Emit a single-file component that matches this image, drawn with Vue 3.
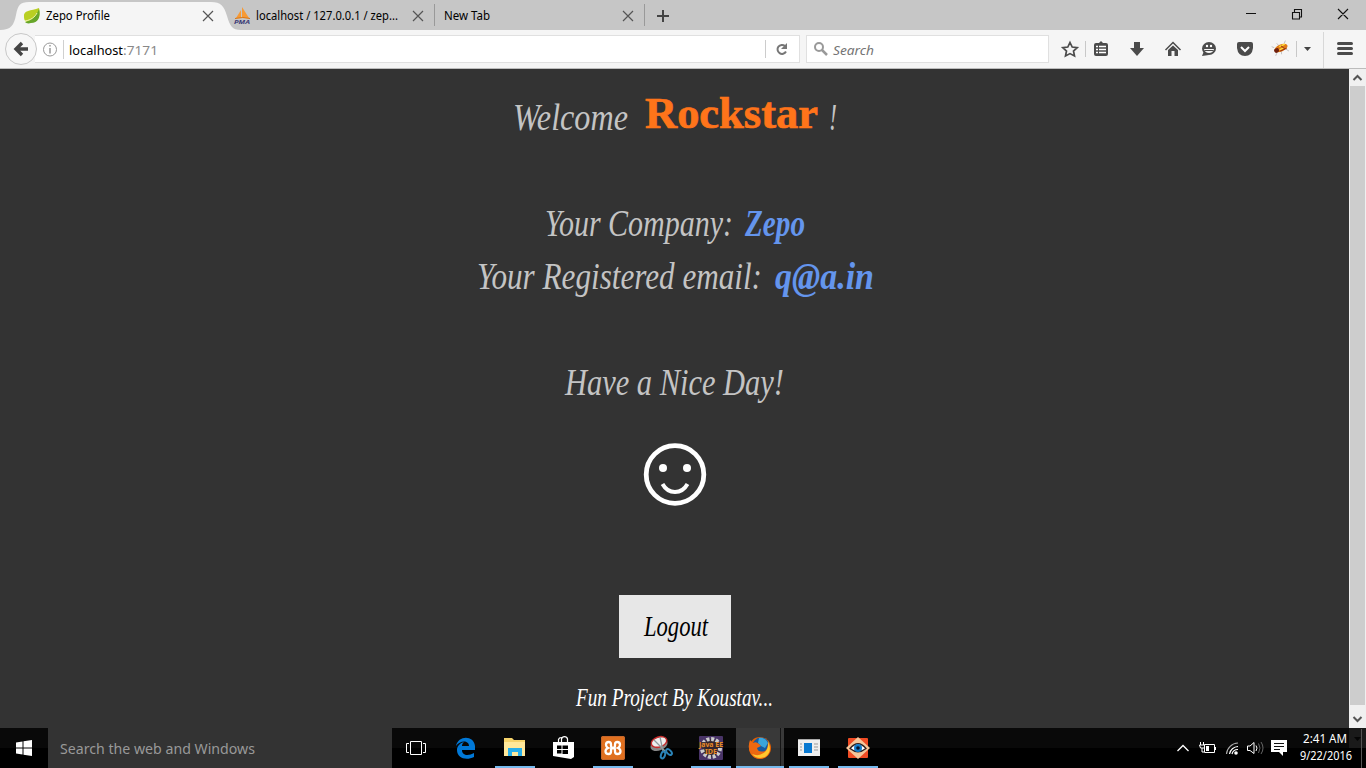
<script setup>
const lines = [
  { id: 'welcome', h: 107, base: 61, words: [
    { t: 'Welcome', x: 513, w: 115 },
    { t: 'Rockstar', x: 645, w: 173, c: 'rock', y: 59 },
    { t: '!', x: 829, w: 8 } ] },
  { id: 'company', h: 53, base: 60, words: [
    { t: 'Your Company:', x: 545, w: 188 },
    { t: 'Zepo', x: 745, w: 60, c: 'blue' } ] },
  { id: 'email', h: 106, base: 60, words: [
    { t: 'Your Registered email:', x: 477, w: 285 },
    { t: 'q@a.in', x: 775, w: 99, c: 'blue' } ] },
  { id: 'day', h: 96, base: 60, words: [
    { t: 'Have a Nice Day!', x: 565, w: 219 } ] }
]
</script>

<template>
  <div class="screen">
    <header class="tabs">
      <svg class="tabshape" width="250" height="30"><path d="M0 30C11 30 14 25 16 15C18 5 20 2 29 2H211C221 2 224 6 227 16C230 26 232 30 241 30Z" fill="#f5f5f5"/></svg>
      <div class="tab first">
        <svg width="18" height="18" viewBox="0 0 18 18"><path d="M1 10C0 3 8 4 16 1C18 9 15 15 9 15C5 16 1 15 1 10Z" fill="#b9cf23"/><path d="M2 15C8 14 13 10 16 2C18 10 15 16 8 16C5 17 3 16 2 15Z" fill="#67a62a"/><path d="M2 14C8 13 12 10 14 6" stroke="#eef4b0" fill="none"/></svg>
        <svg class="label" width="150" height="22"><text x="0" y="15" textLength="64" lengthAdjust="spacingAndGlyphs">Zepo Profile</text></svg>
        <svg class="close" width="12" height="12"><path d="M1 1L11 11M11 1L1 11"/></svg>
      </div>
      <div class="tab second">
        <svg width="18" height="18" viewBox="0 0 18 18"><path d="M2 11L7 3V11ZM8 11V0L15 11Z" fill="#f79a35"/><path d="M1 11.500Q9 9.500 16 11.500" stroke="#d97513" fill="none"/><text x="0" y="17" font-size="6" font-weight="bold" font-style="italic" textLength="16" lengthAdjust="spacingAndGlyphs" fill="#3b3b76">PMA</text></svg>
        <svg class="label" width="148" height="22"><text x="0" y="15" textLength="142" lengthAdjust="spacingAndGlyphs">localhost / 127.0.0.1 / zep...</text></svg>
        <svg class="close" width="12" height="12"><path d="M1 1L11 11M11 1L1 11"/></svg>
      </div>
      <div class="tab third">
        <svg class="label" width="100" height="22"><text x="0" y="15" textLength="46" lengthAdjust="spacingAndGlyphs">New Tab</text></svg>
        <svg class="close" width="12" height="12"><path d="M1 1L11 11M11 1L1 11"/></svg>
      </div>
      <svg class="plus" width="14" height="14"><path d="M7 1V13M1 7H13" stroke="#444" stroke-width="2"/></svg>
      <svg class="winctl" width="120" height="30"><path d="M10 13.500H20M56.500 12.500H63.500V19H56.500ZM58.500 12V9.500H65.500V17H64M102 9L112 19M112 9L102 19" fill="none" stroke="#111" stroke-width="1.1"/></svg>
    </header>

    <nav class="nav">
      <div class="url">
        <svg width="58" height="27"><circle cx="15" cy="13.500" r="6.500" fill="none" stroke="#999"/><path d="M15 12V17.500M15 9V10.500" stroke="#999" stroke-width="1.500"/><path d="M28.500 4V23" stroke="#d0d0d0"/></svg>
        <svg class="address" width="120" height="27"><text x="0" y="19" textLength="54" lengthAdjust="spacingAndGlyphs">localhost</text><text class="port" x="54" y="19" textLength="35" lengthAdjust="spacingAndGlyphs">:7171</text></svg>
        <svg class="reload" width="34" height="27"><path d="M.5 4V22" stroke="#ccc"/><path d="M20 10A4.500 4.500 0 1 0 21 15.500" fill="none" stroke="#777" stroke-width="2"/><path d="M22 7V13H16Z" fill="#777"/></svg>
      </div>
      <div class="search">
        <svg width="22" height="26"><circle cx="12" cy="11" r="4" fill="none" stroke="#999" stroke-width="2"/><path d="M15 14L20 19" stroke="#999" stroke-width="2.500"/></svg>
        <svg width="100" height="26"><text class="hint" x="4" y="19" textLength="41" lengthAdjust="spacingAndGlyphs">Search</text></svg>
      </div>
      <svg class="tools" width="312" height="38" viewBox="1054 30 312 38">
        <path d="M1070 42.500L1072.200 47L1077.200 47.600L1073.500 51L1074.500 56L1070 53.600L1065.500 56L1066.500 51L1062.800 47.600L1067.800 47Z" fill="none" stroke="#4b4b4b" stroke-width="1.700"/>
        <path d="M1085.500 41V57M1296.500 41V57" stroke="#c8c8c8"/>
        <path d="M1096 43H1099L1101 41L1103 43H1106Q1108 43 1108 45V54Q1108 56 1106 56H1096Q1094 56 1094 54V45Q1094 43 1096 43Z" fill="#4b4b4b"/><path d="M1096 46.500H1098M1099 46.500H1106M1096 49.500H1098M1099 49.500H1106M1096 52.500H1098M1099 52.500H1106" stroke="#fff" stroke-width="1.500"/>
        <path d="M1134 42H1140V48H1144L1137 56L1130 48H1134Z" fill="#4b4b4b"/>
        <path d="M1165.500 50L1173 42.500L1180.500 50" fill="none" stroke="#4b4b4b" stroke-width="1.500"/><path d="M1168 50L1173 45.500L1178 50V56H1174.500V51H1171.500V56H1168Z" fill="#4b4b4b"/>
        <ellipse cx="1209" cy="48.500" rx="7" ry="6.500" fill="#4b4b4b"/><path d="M1202 56L1204 51L1209 55Z" fill="#4b4b4b"/><path d="M1204 49H1214Q1213 53 1209 53Q1205 53 1204 49" fill="#f5f5f5"/><path d="M1204.500 50.500H1213.500" stroke="#4b4b4b"/><circle cx="1207" cy="46" r="1.200" fill="#fff"/><circle cx="1211" cy="46" r="1.200" fill="#fff"/>
        <path d="M1239 42H1251Q1253 42 1253 44V48Q1252 56 1245 56Q1238 56 1237 48V44Q1237 42 1239 42Z" fill="#4b4b4b"/><path d="M1241 47L1245 51L1249 47" stroke="#fff" stroke-width="2" fill="none"/>
        <g transform="rotate(-24 1281 48)"><path d="M1275 45L1273 43M1280 45L1279 42M1286 45L1288 43M1275 51L1273 53M1280 51L1279 54M1285 51L1287 54" stroke="#bbb" stroke-width=".8"/><ellipse cx="1281" cy="48" rx="7" ry="3.500" fill="#e07b18"/><path d="M1280 46H1286M1279 49H1284" stroke="#ffe43d" stroke-width="1.300"/><ellipse cx="1276" cy="48.500" rx="2.500" ry="2.300" fill="#70200d"/><path d="M1279 50.500H1286M1282 46L1284 50" stroke="#9c3411"/></g>
        <path d="M1304 47H1311L1307.500 51Z" fill="#444"/><path d="M1323.500 32V68" stroke="#d8d8d8"/>
        <path d="M1338.500 43.500H1351.500M1338.500 48.500H1351.500M1338.500 53.500H1351.500" stroke="#4b4b4b" stroke-width="3" stroke-linecap="round"/>
      </svg>
      <svg class="back" width="34" height="34"><circle cx="17" cy="17" r="15.500" fill="#f7f7f7" stroke="#c8c8c8"/><path d="M24 17H12M18 11L12 17L18 23" fill="none" stroke="#444" stroke-width="3.400"/></svg>
    </nav>

    <div class="body">
      <main class="page">
        <svg v-for="l in lines" :key="l.id" class="line" width="1349" :height="l.h">
          <text v-for="w in l.words" :key="w.t" :class="w.c" :x="w.x" :y="w.y || l.base" :textLength="w.w" lengthAdjust="spacingAndGlyphs">{{ w.t }}</text>
        </svg>
        <svg class="smile" width="64" height="64"><g fill="none" stroke="#fff"><circle cx="32" cy="31.500" r="28.800" stroke-width="4.800"/><path d="M19.500 41Q24 49 32 49Q40 49 44.500 41" stroke-width="4"/></g><circle cx="20" cy="25" r="4" fill="#fff"/><circle cx="44" cy="25" r="4" fill="#fff"/></svg>
        <button class="logout"><svg width="112" height="63"><text x="25" y="41" textLength="64" lengthAdjust="spacingAndGlyphs">Logout</text></svg></button>
        <svg class="credit" width="200" height="36"><text x="1" y="25" textLength="197" lengthAdjust="spacingAndGlyphs">Fun Project By Koustav...</text></svg>
      </main>
      <aside class="scroll">
        <svg width="17" height="17"><path d="M4.500 11L8.500 7L12.500 11" fill="none" stroke="#555" stroke-width="2"/></svg>
        <div class="thumb"></div>
        <svg width="17" height="17"><path d="M4.500 6L8.500 10L12.500 6" fill="none" stroke="#555" stroke-width="2"/></svg>
      </aside>
    </div>

    <footer class="taskbar">
      <div class="start"><svg width="16" height="16"><path d="M0 2.500L6.500 1.500V7.500H0ZM7.500 1.300L16 0V7.500H7.500ZM0 8.500H6.500V14.500L0 13.500ZM7.500 8.500H16V16L7.500 14.700Z" fill="#fff"/></svg></div>
      <div class="cortana"><svg width="220" height="40"><text x="0" y="26" textLength="195" lengthAdjust="spacingAndGlyphs">Search the web and Windows</text></svg></div>
      <div class="apps">
        <div class="app view"><svg width="24" height="24"><path d="M6.500 5.500H17.500V18.500H6.500ZM5 7.500H2.500V16.500H5M19 7.500H21.500V16.500H19" fill="none" stroke="#fff"/></svg></div>
        <div class="app"><svg width="24" height="24"><path d="M2 10C4-1 20-1 21 10V14H8C8 20 15 20 20 17V21C12 25 3 22 3 14C3 10 6 7 10 6C8 8 8 9 8 10H15C15 4 6 4 2 10Z" fill="#0078d7"/></svg></div>
        <div class="app run"><svg width="24" height="24"><path d="M1 2H9L11 4H22V20H1Z" fill="#f6d36b"/><path d="M1 6H22V20H1Z" fill="#ffe89a"/><path d="M5 20V12H19V20H15V16H9V20Z" fill="#28afea"/></svg></div>
        <div class="app"><svg width="24" height="24"><path d="M1 6H22V21L19 23L1 20Z" fill="#fff"/><path d="M6.500 6V3.500Q7 1.500 9.500 1.500M9.500 6V3Q10 .7 12.500 .7Q15 .7 15.500 3V6" stroke="#fff" stroke-width="1.200" fill="none"/><path d="M5 9.500H9.500V13H5ZM10.500 9.500H16V13H10.500ZM5 14H9.500V17.500H5ZM10.500 14H16V18H10.500Z" fill="#000"/></svg></div>
        <div class="app run"><svg width="24" height="24"><rect width="24" height="24" rx="2" fill="#e0701f"/><rect x=".5" y=".5" width="23" height="23" rx="2" fill="none" stroke="#c4662c"/><path d="M10 8.500Q10 6 7.700 6Q5 6 5 8.800Q5 11 7 12Q4.500 13 4.500 15.200Q4.500 18 7.700 18Q10 18 10 15.500V14.500Q10 12 12 12Q14 12 14 14.500V15.500Q14 18 16.300 18Q19.500 18 19.500 15.200Q19.500 13 17 12Q19 11 19 8.800Q19 6 16.300 6Q14 6 14 8.500V9.500Q14 12 12 12Q10 12 10 9.500Z" fill="none" stroke="#fff" stroke-width="2.300"/></svg></div>
        <div class="app"><svg width="24" height="24"><ellipse cx="9" cy="9" rx="9" ry="5.500" transform="rotate(-22 9 9)" fill="#888"/><ellipse cx="9" cy="6" rx="8" ry="5" transform="rotate(-18 9 6)" fill="#eee" stroke="#c52c2c" stroke-width="1.500"/><path d="M4 4L15 15M10 1L13 15" stroke="#8d9a9e" stroke-width="1.300"/><g fill="none" stroke="#2a83b7" stroke-width="2"><ellipse cx="13" cy="19" rx="2" ry="3.500" transform="rotate(20 13 19)"/><ellipse cx="19" cy="16" rx="2" ry="3.500" transform="rotate(-45 19 16)"/></g></svg></div>
        <div class="app run"><svg width="24" height="24"><rect width="24" height="24" rx="1" fill="#493467"/><circle cx="12" cy="12" r="9" fill="#382d38" stroke="#ccc" stroke-width="4" stroke-dasharray="3 1.700"/><path d="M0 6H24V12H18V18H6V12H0Z" fill="#33252c" opacity=".9"/><text class="ide" x="0" y="11" textLength="24" lengthAdjust="spacingAndGlyphs">Java EE</text><text class="ide" x="6" y="18" textLength="12" lengthAdjust="spacingAndGlyphs">IDE</text></svg></div>
        <div class="app active"><svg width="24" height="24"><circle cx="12" cy="12" r="11" fill="#e66000"/><circle cx="13" cy="10" r="8.500" fill="#175a9f"/><path d="M11 2Q17 1 20 7L17 12L13 10L10 7Z" fill="#3aa5db"/><path d="M2 4L5 7Q8 5 11 8L13 10L9 12Q10 17 17 15Q20 13 20 6Q25 15 18 21Q9 26 3 18Q-1 12 2 4Z" fill="#ed6811"/><path d="M20 5Q25 16 17 21Q9 24 4 18Q11 21 17 16Q21 12 20 5Z" fill="#ffc72e"/></svg></div>
        <div class="app run"><svg width="24" height="24"><rect x="1" y="3" width="22" height="17" fill="#eee"/><path d="M1 3.500H23" stroke="#aaa"/><rect x="7" y="7" width="8" height="10" fill="#0878d0"/><path d="M3 8H5M3 11H5M3 14H5M17 8H21M17 11H21M17 14H21" stroke="#999"/></svg></div>
        <div class="app run"><svg width="24" height="24"><rect x="2" y="2" width="20" height="20" rx="1" fill="#f04c24"/><path d="M0 12L12 1L24 12L12 23Z" fill="#f4c69b"/><path d="M4 12.500Q12 3 20 12.500Q12 19 4 12.500Z" fill="#fff" stroke="#2c2020" stroke-width="1.300"/><circle cx="12" cy="12" r="4" fill="#137cca"/><circle cx="12" cy="12" r="1.800" fill="#00142e"/></svg></div>
      </div>
      <svg class="tray" width="206" height="40" viewBox="1160 728 206 40">
        <path d="M1349 728H1366V748H1349Z" fill="#1a1a1a"/><path d="M1354 737H1361L1357.500 741Z" fill="#050505"/>
        <path d="M1177.500 751L1183 745.500L1188.500 751" fill="none" stroke="#fff" stroke-width="1.300"/>
        <path d="M1204.500 744.500H1214.500V752.500H1204.500ZM1215.500 747V750M1200.500 742V745M1203.500 742V745M1199.500 745H1204.500V748H1200.500ZM1202 748V752H1204" fill="none" stroke="#fff"/><path d="M1206 746H1209V751H1206Z" fill="#fff"/>
        <g fill="none" stroke="#aaa" stroke-width="1.200"><path d="M1226.500 754A12 12 0 0 1 1238 743"/><path d="M1229.500 754A9 9 0 0 1 1238 746.500" stroke="#fff"/><path d="M1232 754A6 6 0 0 1 1238 749.500" stroke="#fff"/></g><circle cx="1236" cy="753" r="1.800" fill="#fff"/>
        <path d="M1247.500 746H1250L1254 742.500V753.500L1250 750.500H1247.500Z" fill="none" stroke="#fff"/><path d="M1256 745.500Q1258 748 1256 751" fill="none" stroke="#fff"/><path d="M1258.500 743.500Q1261.500 748 1258.500 753M1261 742Q1265 748 1261 754" fill="none" stroke="#666"/>
        <path d="M1271 740H1287V752H1283V756L1279 752H1271Z" fill="#fff"/><path d="M1274 743.500H1284M1274 746.500H1284M1274 749.500H1280" stroke="#111"/>
        <text x="1303" y="743" textLength="44" lengthAdjust="spacingAndGlyphs">2:41 AM</text>
        <text x="1300" y="760" textLength="52" lengthAdjust="spacingAndGlyphs">9/22/2016</text>
        <path d="M1361.500 729V768" stroke="#555"/>
      </svg>
    </footer>
  </div>
</template>

<style scoped>
.screen { width: 1366px; height: 768px; display: flex; flex-direction: column; overflow: hidden; background: #333; font-family: "Noto Sans", "Open Sans", sans-serif; }
svg { display: block; flex: none; overflow: visible; }
.tabs { height: 30px; flex: none; display: flex; align-items: center; background: #c6c6c6; position: relative; }
.tabshape { position: absolute; left: 0; top: 0; }
.tab { display: flex; align-items: center; height: 22px; position: relative; font-size: 12px; box-sizing: border-box; padding-top: 1px; }
.first { width: 214px; margin-left: 23px; gap: 5px; }
.second { width: 198px; gap: 4px; border-right: 1px solid #999; }
.second > svg:first-child { margin-left: -3px; }
.third { width: 210px; padding-left: 9px; border-right: 1px solid #999; }
.close { margin-left: auto; margin-right: 10px; stroke: #555; stroke-width: 1.2; }
.first .close { margin-right: 23px; }
.plus { margin-left: 11px; margin-top: 2px; }
.winctl { margin-left: auto; margin-right: 10px; }
.nav { height: 39px; flex: none; box-sizing: border-box; border-bottom: 1px solid #bcbcbc; background: #f5f5f5; display: flex; align-items: flex-start; position: relative; }
.url { width: 765px; height: 28px; margin: 5px 0 0 35px; box-sizing: border-box; background: #fff; border: 1px solid #e0e0e0; border-left: 0; display: flex; font-size: 13px; }
.url > svg:first-child { margin-right: -24px; }
.reload { margin-left: auto; }
.port { fill: #888; }
.search { width: 243px; height: 28px; margin: 5px 0 0 6px; box-sizing: border-box; border: 1px solid #e0e0e0; background: #fff; display: flex; }
.hint { font-size: 13px; font-style: italic; fill: #757575; }
.tools { margin-left: auto; }
.back { position: absolute; left: 4px; top: 2px; }
.body { height: 659px; flex: none; display: flex; }
.page { width: 1349px; display: flex; flex-direction: column; align-items: center; background: #333; }
.line { font: italic 38px "Liberation Serif", serif; fill: #c4c4c4; }
.blue { fill: #6495ed; font-weight: bold; }
.rock { fill: #ff741a; font: bold 44px "Liberation Serif", serif; stroke: #ff741a; stroke-width: .7px; }
.smile { margin-top: 12px; }
.logout { display: block; margin: 88px 0 0; padding: 0; border: 0; width: 112px; height: 63px; background: #e7e7e7; font: italic 30px "Liberation Serif", serif; }
.credit { margin-top: 23px; font: italic 25px "Liberation Serif", serif; fill: #fff; }
.scroll { width: 17px; background: #f0f0f0; display: flex; flex-direction: column; }
.thumb { height: 619px; margin: 0 1px; background: #cdcdcd; }
.scroll > svg:last-child { margin-top: auto; }
.taskbar { height: 40px; flex: none; display: flex; background: linear-gradient(#090909 50%, #000 50%); }
.start { width: 48px; display: flex; align-items: center; justify-content: center; }
.cortana { width: 332px; padding-left: 12px; background: #333; font-size: 15px; fill: #999; }
.apps { display: flex; gap: 1px; }
.app { width: 48px; height: 40px; display: flex; align-items: center; justify-content: center; position: relative; }
.view { width: 49px; }
.view svg { margin-left: -1px; }
.run::after, .active::after { content: ""; position: absolute; bottom: 0; left: 4px; width: 40px; height: 2px; background: #76b9ed; }
.active { background: linear-gradient(#393939 50%, #333 50%); }
.active::after { left: 0; width: 48px; }
.active::before { content: ""; position: absolute; right: 3px; top: 0; width: 1px; height: 40px; background: #151515; }
.ide { font-size: 7px; font-weight: bold; fill: #e88b25; }
.tray { margin-left: auto; font-size: 12px; }
.tray text { fill: #fff; }
</style>

<style>
body { margin: 0; overflow: hidden; }
</style>
